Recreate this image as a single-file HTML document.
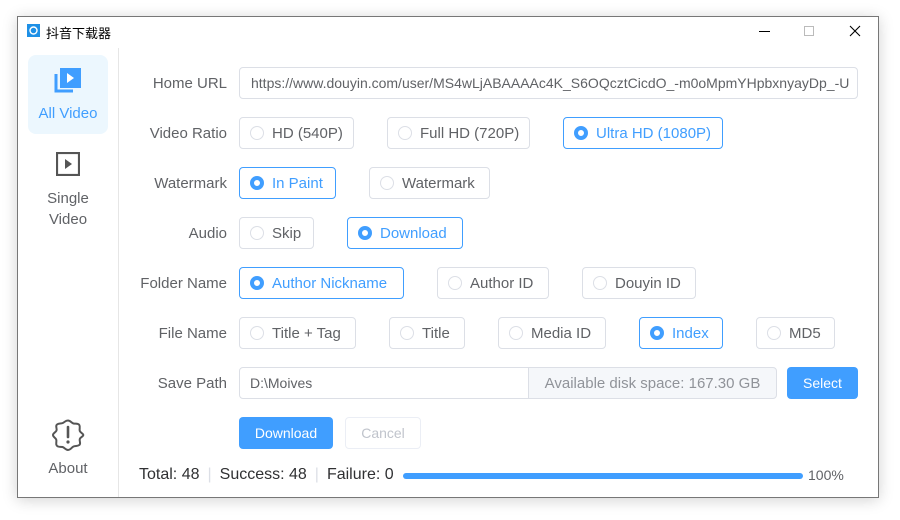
<!DOCTYPE html>
<html><head><meta charset="utf-8"><style>
*{box-sizing:border-box;margin:0;padding:0}
body{width:900px;height:520px;background:#fff;font-family:"Liberation Sans","Noto Sans CJK SC",sans-serif;position:relative;overflow:hidden;color:#606266}
.win{position:absolute;left:17px;top:16px;width:862px;height:482px;border:1px solid #777;background:#fff;box-shadow:0 2px 14px rgba(0,0,0,.18)}
.title{position:absolute;left:46px;top:23px;font-size:13px;color:#000}
.sb{position:absolute;left:118px;top:48px;width:1px;height:449px;background:#e6e6e6}
.nav{position:absolute;left:28px;width:80px;text-align:center;font-size:15px;color:#606266}
.lab{position:absolute;right:673px;font-size:15px;color:#606266;text-align:right;white-space:nowrap}
.box{position:absolute;height:32px;border:1px solid #dcdfe6;border-radius:4px;font-size:15px;color:#606266;display:flex;align-items:center;padding-left:10px;white-space:nowrap}
.box i{width:14px;height:14px;border:1px solid #dcdfe6;border-radius:50%;margin-right:8px;flex:none}
.box.on{border-color:#409eff;color:#409eff}
.box.on i{border:4px solid #409eff;background:#fff}
.btn{position:absolute;height:32px;border-radius:4px;font-size:14px;display:flex;align-items:center;justify-content:center}
</style></head><body>
<div class="win"></div>
<svg style="position:absolute;left:27px;top:24px" width="13" height="13"><rect width="13" height="13" fill="#1e90e6"/><circle cx="6.5" cy="6.5" r="3.5" fill="none" stroke="#fff" stroke-width="1.4"/></svg>
<div class="title">抖音下载器</div>
<div style="position:absolute;left:759px;top:31px;width:11px;height:1px;background:#000"></div>
<div style="position:absolute;left:804px;top:26px;width:10px;height:10px;border:1px solid #bbb"></div>
<svg style="position:absolute;left:849px;top:25px" width="12" height="12"><path d="M1 1L11 11M11 1L1 11" stroke="#000" stroke-width="1.1"/></svg>
<div class="sb"></div>
<div style="position:absolute;left:28px;top:55px;width:80px;height:79px;background:#ecf7fe;border-radius:8px"></div>
<svg style="position:absolute;left:54px;top:67px" width="28" height="28"><path d="M2 7v17h17" fill="none" stroke="#409eff" stroke-width="3"/><rect x="6" y="1" width="21" height="20" fill="#409eff"/><path d="M13 6l7 5-7 5z" fill="#fff"/></svg>
<div class="nav" style="top:105px;color:#409eff">All Video</div>
<svg style="position:absolute;left:56px;top:152px" width="24" height="24"><rect x="1" y="1" width="22" height="22" fill="none" stroke="#555" stroke-width="2.2"/><path d="M9 7l7 5-7 5z" fill="#555"/></svg>
<div class="nav" style="top:188px;line-height:21px">Single<br>Video</div>
<svg style="position:absolute;left:51px;top:418px" width="34" height="34" viewBox="0 0 34 34"><path d="M17 2.5c2.5 0 3.5 2.5 5.5 3s4.5-.5 5.8 1.5-.3 4 .5 6 3.5 2.5 3.5 4-2.7 2-3.5 4 1.5 4.5-.5 6-3.8.5-5.8 1.5-3 3.5-5.5 3.5-3.5-2.5-5.5-3-4.5.5-5.8-1.5.3-4-.5-6S2 19 2 17s2.7-2.5 3.5-4.5-1.5-4.5.5-6 3.8-.5 5.8-1.5S14.5 2.5 17 2.5z" fill="none" stroke="#555" stroke-width="2"/><path d="M17 9v10" stroke="#555" stroke-width="2.6" stroke-linecap="round"/><circle cx="17" cy="24" r="1.6" fill="#555"/></svg>
<div class="nav" style="top:460px">About</div>

<div class="lab" style="top:75px">Home URL</div>
<div class="box" style="left:239px;top:67px;width:619px;font-size:14px;padding-left:11px;overflow:hidden">https://www.douyin.com/user/MS4wLjABAAAAc4K_S6OQcztCicdO_-m0oMpmYHpbxnyayDp_-U</div>

<div class="lab" style="top:125px">Video Ratio</div>
<div class="box" style="left:239px;top:117px;width:115px"><i></i>HD (540P)</div>
<div class="box" style="left:387px;top:117px;width:143px"><i></i>Full HD (720P)</div>
<div class="box on" style="left:563px;top:117px;width:160px"><i></i>Ultra HD (1080P)</div>

<div class="lab" style="top:175px">Watermark</div>
<div class="box on" style="left:239px;top:167px;width:97px"><i></i>In Paint</div>
<div class="box" style="left:369px;top:167px;width:121px"><i></i>Watermark</div>

<div class="lab" style="top:225px">Audio</div>
<div class="box" style="left:239px;top:217px;width:75px"><i></i>Skip</div>
<div class="box on" style="left:347px;top:217px;width:116px"><i></i>Download</div>

<div class="lab" style="top:275px">Folder Name</div>
<div class="box on" style="left:239px;top:267px;width:165px"><i></i>Author Nickname</div>
<div class="box" style="left:437px;top:267px;width:112px"><i></i>Author ID</div>
<div class="box" style="left:582px;top:267px;width:114px"><i></i>Douyin ID</div>

<div class="lab" style="top:325px">File Name</div>
<div class="box" style="left:239px;top:317px;width:117px"><i></i>Title + Tag</div>
<div class="box" style="left:389px;top:317px;width:76px"><i></i>Title</div>
<div class="box" style="left:498px;top:317px;width:108px"><i></i>Media ID</div>
<div class="box on" style="left:639px;top:317px;width:84px"><i></i>Index</div>
<div class="box" style="left:756px;top:317px;width:79px"><i></i>MD5</div>

<div class="lab" style="top:375px">Save Path</div>
<div class="box" style="left:239px;top:367px;width:290px;border-radius:4px 0 0 4px;font-size:14px">D:\Moives</div>
<div class="box" style="left:528px;top:367px;width:249px;border-radius:0 4px 4px 0;background:#f5f7fa;color:#909399;justify-content:center;padding:0">Available disk space: 167.30 GB</div>
<div class="btn" style="left:787px;top:367px;width:71px;background:#409eff;color:#fff">Select</div>

<div class="btn" style="left:239px;top:417px;width:94px;background:#409eff;color:#fff">Download</div>
<div class="btn" style="left:345px;top:417px;width:76px;border:1px solid #ebeef5;color:#c0c4cc">Cancel</div>

<div style="position:absolute;left:139px;top:466px;font-size:16px;color:#303133;white-space:nowrap">Total: 48<span style="color:#dcdfe6;margin:0 8px">|</span>Success: 48<span style="color:#dcdfe6;margin:0 8px">|</span>Failure: 0</div>
<div style="position:absolute;left:403px;top:473px;width:400px;height:6px;border-radius:3px;background:#409eff"></div>
<div style="position:absolute;left:808px;top:467px;font-size:14px;color:#606266">100%</div>
</body></html>
